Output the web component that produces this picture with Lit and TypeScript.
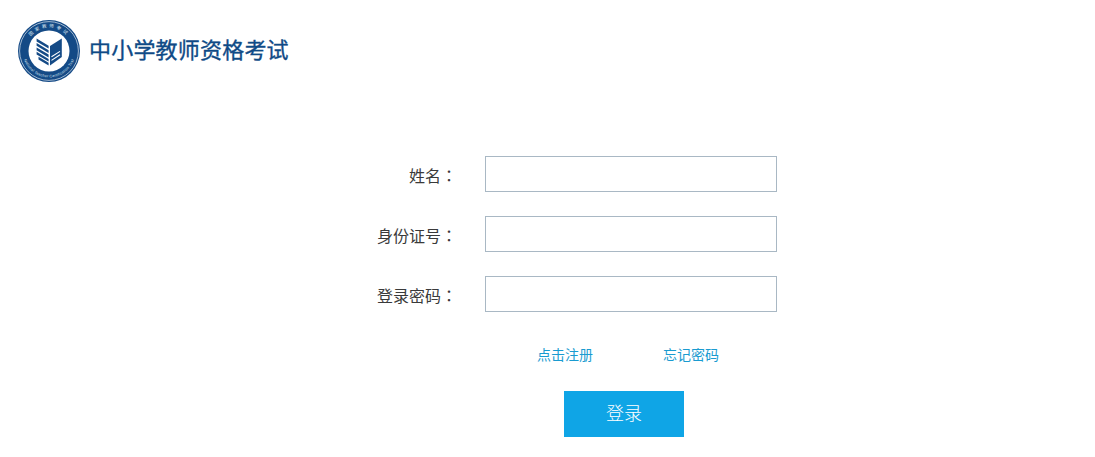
import { LitElement, html, css } from "lit";
import { customElement } from "lit/decorators.js";

@customElement("app-root")
export class AppRoot extends LitElement {
  static styles = css`
    :host {
      display: block;
      width: 1095px;
      height: 457px;
      overflow: hidden;
      background: #fff;
      font-family: "Liberation Sans", "Noto Sans CJK SC", sans-serif;
      color: #3a3a3a;
    }
    .header {
      display: flex;
      align-items: center;
      gap: 9px;
      padding: 20px 0 0 18px;
      height: 62px;
    }
    .logo {
      width: 62px;
      height: 62px;
      flex: none;
      display: block;
    }
    .title {
      font-size: 22px;
      line-height: 30px;
      color: #0f4a86;
      font-weight: 400;
      letter-spacing: 0.2px;
      -webkit-text-stroke: 0.35px #0f4a86;
    }
    .form {
      display: flex;
      flex-direction: column;
      gap: 24px;
      padding: 74px 0 0 337px;
    }
    .row {
      display: flex;
      align-items: center;
      gap: 28px;
    }
    .label {
      width: 120px;
      text-align: right;
      font-size: 16px;
      line-height: 38px;
      height: 36px;
      font-weight: 400;
    }
    .colon {
      font-family: "Noto Sans CJK TC", sans-serif;
    }
    .input {
      width: 292px;
      height: 36px;
      box-sizing: border-box;
      border: 1px solid #a9b8c4;
      background: #fff;
      padding: 0 8px;
      margin: 0;
      outline: none;
      display: block;
    }
    .links {
      display: flex;
      gap: 70px;
      padding: 33px 0 0 537px;
      font-size: 14px;
      line-height: 20px;
    }
    .links a {
      color: #1a9bd0;
      text-decoration: none;
      font-weight: 400;
    }
    .actions {
      padding: 26px 0 0 564px;
    }
    .btn {
      display: block;
      width: 120px;
      height: 46px;
      border: 0;
      padding: 0 0 4px;
      background: #0fa5e6;
      color: #fff;
      font-family: inherit;
      font-size: 18px;
      font-weight: 300;
    }
    .seal-text {
      font-family: "Liberation Sans", "Noto Sans CJK SC", sans-serif;
      fill: #dfe9f3;
    }
  `;

  render() {
    return html`
      <div class="header">
        <svg class="logo" viewBox="0 0 62 62" aria-hidden="true">
          <defs>
            <path id="seal-top" d="M7.6 31 A23.4 23.4 0 0 1 54.4 31"></path>
            <path id="seal-bottom" d="M4.6 31 A26.4 26.4 0 0 0 57.4 31"></path>
          </defs>
          <circle cx="31" cy="31" r="31" fill="#144a86"></circle>
          <circle cx="31" cy="31" r="29.4" fill="none" stroke="#dbe5ef" stroke-width="0.7"></circle>
          <circle cx="31" cy="31" r="20.5" fill="#fff"></circle>
          <text class="seal-text" font-size="4.6" text-anchor="middle" letter-spacing="2.4">
            <textPath href="#seal-top" startOffset="50%">国家教师考试</textPath>
          </text>
          <text class="seal-text" font-size="3.7" text-anchor="middle" letter-spacing="0.25">
            <textPath href="#seal-bottom" startOffset="50%">National Teacher Certification Test</textPath>
          </text>
          <path
            d="M18.6 18.6 L30.6 25.8 V28.6 L18.6 21.4 Z
               M18.6 23 L30.6 30.2 V33 L18.6 25.8 Z
               M18.6 27.4 L30.6 34.6 V37.4 L18.6 30.2 Z
               M18.6 31.8 L30.6 39 V41.6 L18.6 34.4 Z
               M20.5 36.8 L30.6 42.8 V45.6 L20.5 39.6 Z"
            fill="#144a86"
          ></path>
          <path d="M32 26 L43.8 18.6 V37 L32 45.6 Z" fill="#144a86"></path>
          <path d="M33.5 36.8 L42 31.4 M33.5 40.4 L42 34.8" stroke="#fff" stroke-width="1.1"></path>
        </svg>
        <div class="title">中小学教师资格考试</div>
      </div>
      <div class="form">
        <div class="row">
          <div class="label">姓名<span class="colon">：</span></div>
          <input class="input" type="text" />
        </div>
        <div class="row">
          <div class="label">身份证号<span class="colon">：</span></div>
          <input class="input" type="text" />
        </div>
        <div class="row">
          <div class="label">登录密码<span class="colon">：</span></div>
          <input class="input" type="password" />
        </div>
      </div>
      <div class="links">
        <a href="#">点击注册</a>
        <a href="#">忘记密码</a>
      </div>
      <div class="actions">
        <button class="btn">登录</button>
      </div>
    `;
  }
}
